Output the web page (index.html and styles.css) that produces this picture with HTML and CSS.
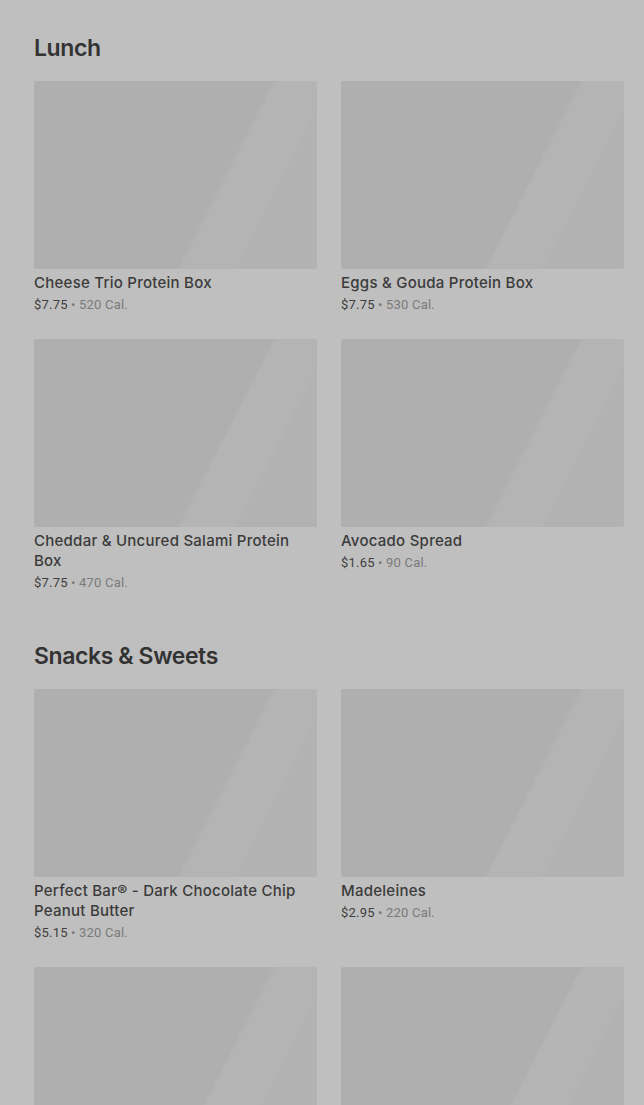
FILE: index.html
```html
<!DOCTYPE html>
<html lang="en">
<head>
  <meta charset="UTF-8">
  <title>Menu</title>
  <link rel="stylesheet" href="styles.css">
</head>
<body>

<section class="menu-section">
  <h2>Lunch</h2>
  <div class="item-grid">
    <div class="item">
      <div class="thumb"></div>
      <div class="item-name">Cheese Trio Protein Box</div>
      <div class="item-meta">$7.75 <span class="cal">• 520 Cal.</span></div>
    </div>
    <div class="item">
      <div class="thumb"></div>
      <div class="item-name">Eggs &amp; Gouda Protein Box</div>
      <div class="item-meta">$7.75 <span class="cal">• 530 Cal.</span></div>
    </div>
    <div class="item">
      <div class="thumb"></div>
      <div class="item-name">Cheddar &amp; Uncured Salami Protein Box</div>
      <div class="item-meta">$7.75 <span class="cal">• 470 Cal.</span></div>
    </div>
    <div class="item">
      <div class="thumb"></div>
      <div class="item-name">Avocado Spread</div>
      <div class="item-meta">$1.65 <span class="cal">• 90 Cal.</span></div>
    </div>
  </div>
</section>

<section class="menu-section">
  <h2>Snacks &amp; Sweets</h2>
  <div class="item-grid">
    <div class="item">
      <div class="thumb"></div>
      <div class="item-name">Perfect Bar® - Dark Chocolate Chip Peanut Butter</div>
      <div class="item-meta">$5.15 <span class="cal">• 320 Cal.</span></div>
    </div>
    <div class="item">
      <div class="thumb"></div>
      <div class="item-name">Madeleines</div>
      <div class="item-meta">$2.95 <span class="cal">• 220 Cal.</span></div>
    </div>
    <div class="item">
      <div class="thumb"></div>
    </div>
    <div class="item">
      <div class="thumb"></div>
    </div>
  </div>
</section>

</body>
</html>
```

FILE: styles.css
```css
body {
  font-family: Inter, "Liberation Sans", sans-serif;
  background-color: #bfbfbf;
  color: #3a3a3a;
  margin: 0;
  padding: 32px 20px 0 34px;
}
.menu-section {
  margin-bottom: 47px;
}
h2 {
  font-size: 23px;
  font-weight: 600;
  letter-spacing: -0.4px;
  line-height: 32px;
  color: #333;
  margin: 0 0 17px 0;
}
.item-grid {
  display: grid;
  grid-template-columns: 283px 283px;
  column-gap: 24px;
  row-gap: 24px;
  align-items: start;
}
.thumb {
  height: 188px;
  border-radius: 2px;
  background: linear-gradient(117deg, #afafaf 0%, #afafaf 63%, #b4b4b4 64%, #b4b4b4 78%, #b2b2b2 79%);
}
.item-name {
  margin-top: 4px;
  font-size: 15px;
  font-weight: 500;
  letter-spacing: 0.25px;
  line-height: 20px;
  color: #3b3b3b;
}
.item-meta {
  margin-top: 2px;
  font-family: Roboto, "Liberation Sans", sans-serif;
  font-size: 13px;
  letter-spacing: 0.2px;
  line-height: 20px;
  color: #404040;
}
.cal {
  color: #7a7a7a;
}
```
